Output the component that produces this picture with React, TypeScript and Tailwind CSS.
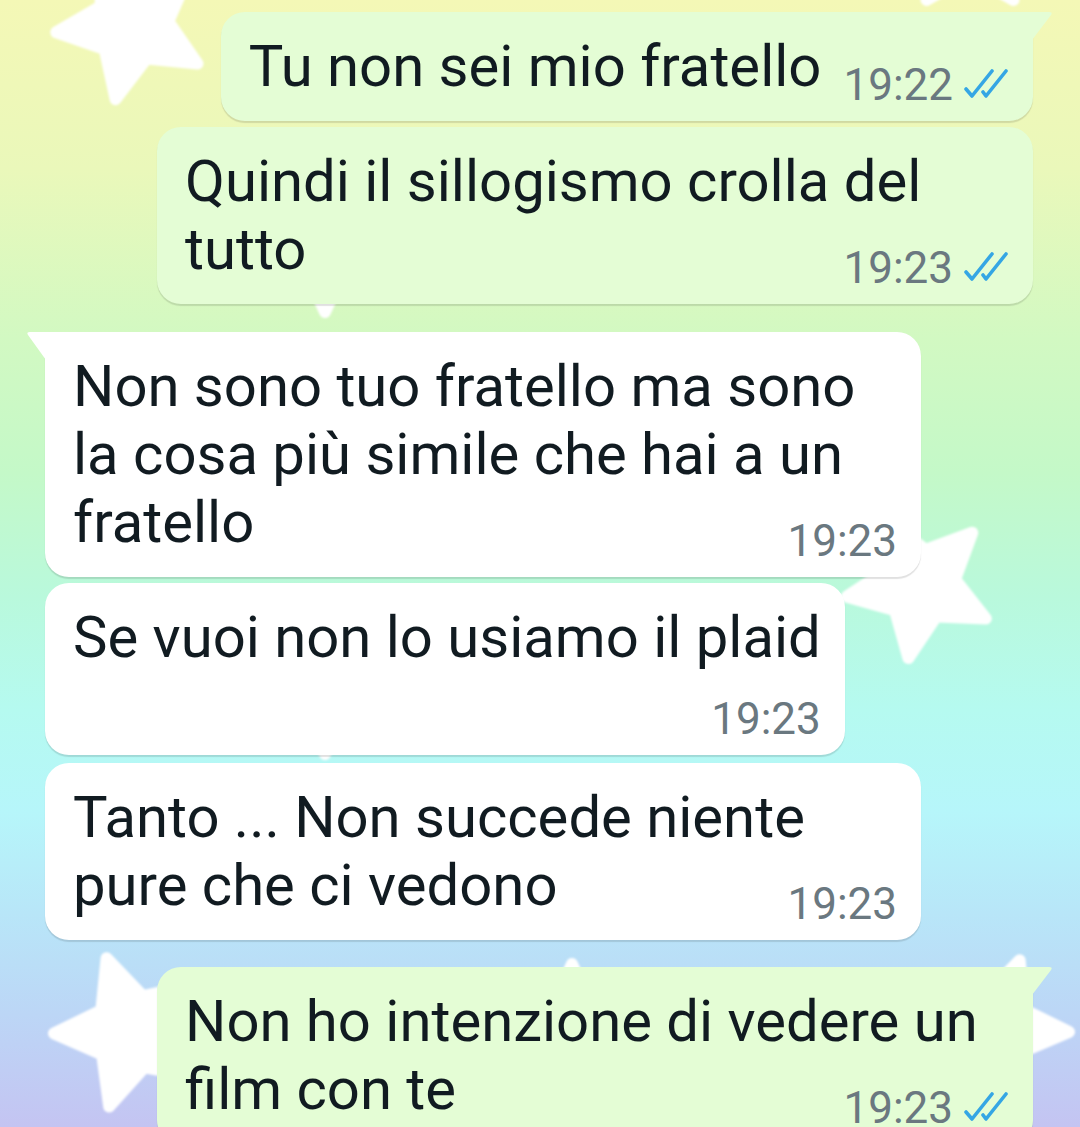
import React from 'react';

type Msg = {
  out: boolean;
  lines: string[];
  time: string;
  tail?: boolean;
  wide?: boolean;
  timeRow?: boolean;
  mt: string;
};

const messages: Msg[] = [
  { out: true, lines: ['Tu non sei mio fratello'], time: '19:22', tail: true, mt: 'mt-[12px]' },
  { out: true, lines: ['Quindi il sillogismo crolla del', 'tutto'], time: '19:23', wide: true, mt: 'mt-[6px]' },
  {
    out: false,
    lines: ['Non sono tuo fratello ma sono', 'la cosa più simile che hai a un', 'fratello'],
    time: '19:23',
    tail: true,
    wide: true,
    mt: 'mt-[28px]',
  },
  { out: false, lines: ['Se vuoi non lo usiamo il plaid'], time: '19:23', timeRow: true, mt: 'mt-[6px]' },
  { out: false, lines: ['Tanto ... Non succede niente', 'pure che ci vedono'], time: '19:23', wide: true, mt: 'mt-[8px]' },
  { out: true, lines: ['Non ho intenzione di vedere un', 'film con te'], time: '19:23', tail: true, wide: true, mt: 'mt-[27px]' },
];

// background stars: centre, outer radius, angle of first tip
const stars = [
  { cx: 132, cy: 25, r: 76, rot: 30.5 },
  { cx: 970, cy: -60, r: 74, rot: 54 },
  { cx: 325, cy: 242, r: 70, rot: 90 },
  { cx: 920, cy: 585, r: 74, rot: -45 },
  { cx: 325, cy: 684, r: 70, rot: 90 },
  { cx: 132, cy: 1032, r: 78, rot: 179 },
  { cx: 572, cy: 1040, r: 76, rot: 270 },
  { cx: 995, cy: 1030, r: 74, rot: 1.5 },
];

function starPoints(cx: number, cy: number, r: number, rot: number) {
  const pts: string[] = [];
  for (let i = 0; i < 10; i++) {
    const rad = i % 2 === 0 ? r : r * 0.48;
    const a = ((rot + i * 36) * Math.PI) / 180;
    pts.push(`${(cx + rad * Math.cos(a)).toFixed(1)},${(cy + rad * Math.sin(a)).toFixed(1)}`);
  }
  return pts.join(' ');
}

function Ticks() {
  return (
    <svg width="46" height="30" viewBox="0 0 46 30" className="mt-[8px]">
      <path d="M3 21 L9 28 L29 3" fill="none" stroke="#35a6e4" strokeWidth="3.6" strokeLinecap="round" strokeLinejoin="round" />
      <path d="M20 24 L23 28 L43 3" fill="none" stroke="#35a6e4" strokeWidth="3.6" strokeLinecap="round" strokeLinejoin="round" />
    </svg>
  );
}

function Time({ time, out, className }: { time: string; out: boolean; className?: string }) {
  return (
    <div className={`flex shrink-0 items-start gap-[10px] ${className ?? ''}`}>
      <span className="text-[44px] leading-[50px] text-[#6a7880]">{time}</span>
      {out && <Ticks />}
    </div>
  );
}

function Bubble({ m }: { m: Msg }) {
  const head = m.lines.slice(0, -1);
  const last = m.lines[m.lines.length - 1];
  return (
    <div className={`flex ${m.out ? 'justify-end pr-[47px]' : 'justify-start pl-[45px]'} ${m.mt}`}>
      <div
        className={`relative rounded-[24px] pl-[28px] pr-[24px] pt-[20px] pb-[21px] shadow-[0_2px_1px_rgba(0,0,0,0.12)] ${
          m.out ? 'bg-[#e4fdd5]' : 'bg-white'
        } ${m.tail ? (m.out ? 'rounded-tr-none' : 'rounded-tl-none') : ''} ${m.wide ? 'w-[876px]' : ''}`}
      >
        {m.tail &&
          (m.out ? (
            <svg width="21" height="28" viewBox="0 0 21 28" className="absolute top-0 right-[-20px]">
              <path d="M0 0 H17 Q21 0 19 3 L0 28 Z" fill="#e4fdd5" />
            </svg>
          ) : (
            <svg width="20" height="28" viewBox="0 0 20 28" className="absolute top-0 left-[-19px]">
              <path d="M20 0 H4 Q0 0 2 3 L20 28 Z" fill="#ffffff" />
            </svg>
          ))}
        {head.map((l) => (
          <div key={l} className="whitespace-nowrap">
            {l}
          </div>
        ))}
        {m.timeRow ? (
          <>
            <div className="whitespace-nowrap">{last}</div>
            <div className="mt-[23px] -mb-[10px] flex justify-end">
              <Time time={m.time} out={m.out} />
            </div>
          </>
        ) : (
          <div className="flex items-end justify-between gap-[22px]">
            <span className="whitespace-nowrap">{last}</span>
            <Time time={m.time} out={m.out} className="-mb-[10px]" />
          </div>
        )}
      </div>
    </div>
  );
}

export default function App() {
  return (
    <div className="relative h-[1127px] w-[1080px] overflow-hidden bg-[linear-gradient(180deg,#f4f8b6_0%,#eaf8ba_15%,#d2f9c2_30%,#c4f9c8_42%,#b9f9dc_53%,#b5faf0_63%,#b6f6fa_72%,#b8e6f8_81%,#bcd6f6_90%,#c4c4f2_100%)] font-['Roboto',sans-serif] text-[58px] leading-[68px] text-[#111b21]">
      {/* wallpaper stars */}
      <svg className="absolute inset-0" width="1080" height="1127" viewBox="0 0 1080 1127">
        <defs>
          <filter id="soft" x="-20%" y="-20%" width="140%" height="140%">
            <feGaussianBlur stdDeviation="1.2" />
          </filter>
        </defs>
        <g filter="url(#soft)">
          {stars.map((s, i) => (
            <polygon
              key={i}
              points={starPoints(s.cx, s.cy, s.r, s.rot)}
              fill="#ffffff"
              stroke="#ffffff"
              strokeWidth="12"
              strokeLinejoin="round"
            />
          ))}
        </g>
      </svg>

      <div className="relative flex flex-col">
        {messages.map((m, i) => (
          <Bubble key={i} m={m} />
        ))}
      </div>
    </div>
  );
}
